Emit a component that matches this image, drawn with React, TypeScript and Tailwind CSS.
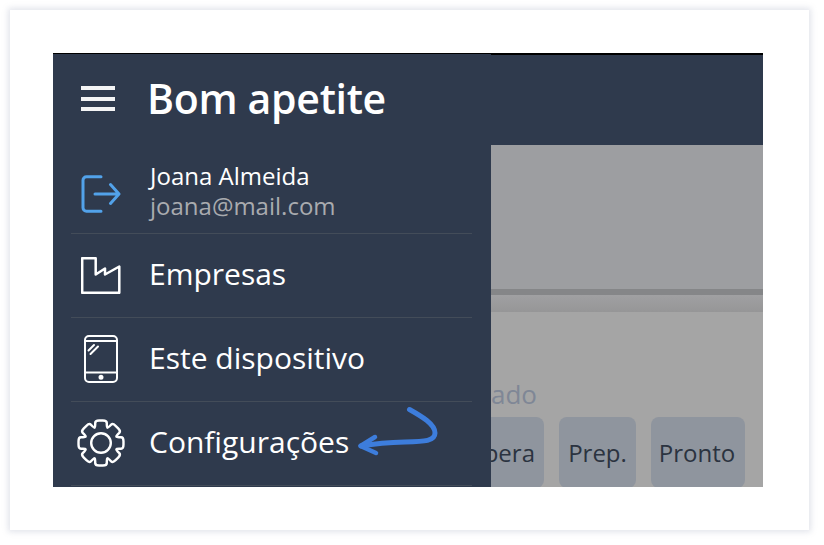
function Logout() {
  return (
    <svg width="40" height="38" viewBox="0 0 40 38" fill="none" stroke="#52a2ea" strokeWidth="3" strokeLinecap="round" strokeLinejoin="round">
      <path d="M20 1.8H5.5a3.5 3.5 0 0 0-3.5 3.5v27.4a3.5 3.5 0 0 0 3.5 3.5H20" />
      <path d="M14 19h23.5M29.5 9.5 38 19l-8.5 9.5" />
    </svg>
  );
}

function Factory() {
  return (
    <svg width="40" height="37" viewBox="0 0 40 37" fill="none" stroke="#ffffff" strokeWidth="2.5" strokeLinejoin="round">
      <path d="M1.2 1.2H14.7V17.5L24 11.5V17.5L38.3 9.5V35.8H1.2Z" />
    </svg>
  );
}

function Tablet() {
  return (
    <svg width="34" height="48" viewBox="0 0 34 48" fill="none" stroke="#ffffff" strokeWidth="2" strokeLinecap="round">
      <rect x="1" y="1" width="32" height="46" rx="4" />
      <path d="M1 6h32M1 37.5h32" strokeLinecap="butt" />
      <path d="M4.5 15.5l5.5-5.5M6.5 19l7.5-7.5" />
      <circle cx="17" cy="42.3" r="1.5" fill="#ffffff" />
    </svg>
  );
}

function gearPath() {
  const c = 24;
  const pts: [number, number][] = [];
  for (let i = 0; i < 8; i++) {
    const a = (i * Math.PI) / 4 - Math.PI / 2;
    const spec: [number, number][] = [
      [a - 0.36, 16.6],
      [a - 0.25, 23.2],
      [a + 0.25, 23.2],
      [a + 0.36, 16.6],
    ];
    for (const [t, r] of spec) pts.push([c + r * Math.cos(t), c + r * Math.sin(t)]);
  }
  const n = pts.length;
  const f = 0.34;
  let d = "";
  for (let i = 0; i < n; i++) {
    const p = pts[(i + n - 1) % n];
    const v = pts[i];
    const x = pts[(i + 1) % n];
    const sx = v[0] + (p[0] - v[0]) * f;
    const sy = v[1] + (p[1] - v[1]) * f;
    const ex = v[0] + (x[0] - v[0]) * f;
    const ey = v[1] + (x[1] - v[1]) * f;
    d += `${i === 0 ? "M" : "L"}${sx.toFixed(2)} ${sy.toFixed(2)}Q${v[0].toFixed(2)} ${v[1].toFixed(2)} ${ex.toFixed(2)} ${ey.toFixed(2)}`;
  }
  return d + "Z";
}

function Gear() {
  return (
    <svg width="48" height="48" viewBox="0 0 48 48" fill="none" stroke="#ffffff" strokeWidth="2.4" strokeLinejoin="round">
      <circle cx="24" cy="24" r="9.8" />
      <path d={gearPath()} />
    </svg>
  );
}

function HandArrow() {
  return (
    <svg width="90" height="55" viewBox="0 0 90 55" fill="none" stroke="#3d7ddc" strokeLinecap="round" strokeLinejoin="round">
      <path d="M54.5 4.5C66 11 80 19 80 28C80 36 70 36.5 50 37C32 37.5 18 39 6 41" strokeWidth="5" />
      <path d="M20 32 5.5 41 21 48" strokeWidth="4.5" />
    </svg>
  );
}

const divider = "flex items-center border-b border-[#434c59] ml-[18px] mr-[19px]";
const iconSlot = "w-[60px] flex justify-center shrink-0 mr-[19px]";
const navText = "text-[30px] leading-[40px] text-white -mt-[2px] -ml-[1px]";

export default function App() {
  return (
    <div className="w-[824px] h-[545px] bg-white overflow-hidden pl-[10px] pt-[10px] font-['Open_Sans',sans-serif]">
      <div className="w-[799px] h-[520px] bg-white shadow-[0_0_6px_2px_rgba(190,195,210,0.45)] pt-[43px] pl-[43px]">
        <div className="w-[710px] h-[434px] flex overflow-hidden bg-[#2f3a4d]">
          <aside className="w-[438px] h-full shrink-0 bg-[#2f3a4d] border-t border-black">
            <div className="h-[91px] flex items-center">
              <div className="ml-[28px] -mt-[2px] w-[34px] flex flex-col gap-[6.7px]">
                <div className="h-[4px] bg-[#f4f4f5]" />
                <div className="h-[4px] bg-[#f4f4f5]" />
                <div className="h-[4px] bg-[#f4f4f5]" />
              </div>
              <div className="ml-[32px] -mt-[2px] text-[41px] leading-none font-semibold text-white tracking-[-0.3px] whitespace-nowrap">Bom apetite</div>
            </div>
            <div className={`h-[88.5px] ${divider}`}>
              <div className={`${iconSlot} mt-[11px]`}><Logout /></div>
              <div className="flex flex-col mt-[4px]">
                <span className="text-[24px] leading-[30px] text-white">Joana Almeida</span>
                <span className="text-[24px] leading-[30px] text-[#a9abaf]">joana@mail.com</span>
              </div>
            </div>
            <div className={`h-[84px] ${divider}`}>
              <div className={iconSlot}><Factory /></div>
              <span className={navText}>Empresas</span>
            </div>
            <div className={`h-[84px] ${divider}`}>
              <div className={iconSlot}><Tablet /></div>
              <span className={navText}>Este dispositivo</span>
            </div>
            <div className={`relative h-[84.5px] ${divider}`}>
              <div className={iconSlot}><Gear /></div>
              <span className={navText}>Configurações</span>
              <div className="absolute left-[284px] top-[3px]">
                <HandArrow />
              </div>
            </div>
          </aside>
          <main className="flex-1 min-w-0 flex flex-col overflow-hidden border-t-2 border-black">
            <div className="h-[90px] shrink-0 bg-[#2f3a4d]" />
            <div className="h-[144px] shrink-0 bg-[#9d9ea1]" />
            <div className="h-[6px] shrink-0 bg-[#858688]" />
            <div className="h-[17px] shrink-0 bg-gradient-to-b from-[#a0a0a2] to-[#969697]" />
            <div className="flex-1 bg-[#a5a5a5] flex flex-col items-end pr-[18px]">
              <div className="self-start mt-[64px] h-[41px] text-[26px] leading-[36px] text-[#7f8796] whitespace-nowrap">ado</div>
              <div className="flex gap-[15px] text-[24px] leading-[38px] text-[#2b3340]">
                <div className="h-[71px] w-[53px] rounded-r-[8px] bg-[#8f959e] pt-[17px] overflow-hidden flex justify-end pr-[9px] whitespace-nowrap">pera</div>
                <div className="h-[71px] w-[77px] rounded-[8px] bg-[#8f959e] pt-[17px] text-center">Prep.</div>
                <div className="h-[71px] w-[94px] rounded-[8px] bg-[#8f959e] pt-[17px] pr-[2px] text-center">Pronto</div>
              </div>
            </div>
          </main>
        </div>
      </div>
    </div>
  );
}
